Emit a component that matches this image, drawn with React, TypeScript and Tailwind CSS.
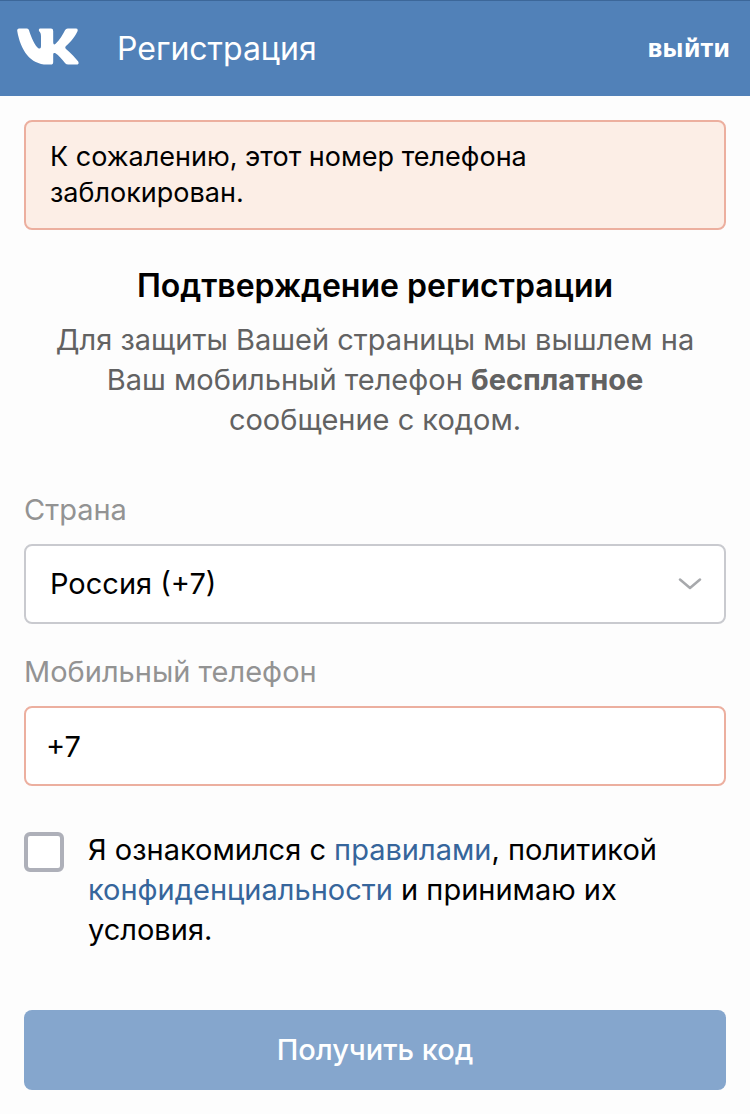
import React, { useState } from "react";

const countries = [
  { code: "ru", label: "Россия (+7)", prefix: "+7" },
  { code: "by", label: "Беларусь (+375)", prefix: "+375" },
  { code: "ua", label: "Украина (+380)", prefix: "+380" },
];

const Logo: React.FC = () => (
  <svg
    className="mb-1 h-[38px] w-[62px] shrink-0"
    viewBox="0 0 62 38"
    fill="#fff"
    aria-hidden="true"
  >
    <path d="M2 .6H10Q11.500 .6 12 2.200C14.500 10 18 17.500 21.300 20.200C23.600 21.500 24 19.500 24 17.500V8.500C24 5.800 23.400 4.500 22.200 3.200C21.400 2 21.900 .6 23.500 .6H34Q36.200 .6 36.200 3V14C36.200 16.500 37.200 17 38.600 15.700C42.500 12 46 6.300 48 2.200Q48.800 .6 50.800 .6H58.800Q61.400 .6 60.500 3.200C58.500 8 53.500 14 49 18.100C48 19.100 48 19.900 49 20.900C54 25 58.500 29.800 61.200 33.600C62.200 35.300 61.200 36.600 59.500 36.600H51.200Q49.400 36.600 48.200 35.200C45 31.200 41.500 27.400 38.500 25.300C37 24.400 36.200 25 36.200 26.500V34Q36.200 36.600 33.700 36.600H30C13.500 36.600 3.500 22.500 .2 2.800Q0 .6 2 .6Z" />
  </svg>
);

const Chevron: React.FC = () => (
  <svg
    className="pointer-events-none absolute right-6 top-1/2 h-3 w-6 -translate-y-1/2"
    viewBox="0 0 24 12"
    fill="none"
    stroke="#a7a9ac"
    strokeWidth={2.5}
    strokeLinecap="round"
    strokeLinejoin="round"
    aria-hidden="true"
  >
    <path d="M2 1.500L12 10L22 1.500" />
  </svg>
);

const App: React.FC = () => {
  const [country, setCountry] = useState("ru");
  const [phone, setPhone] = useState("+7");
  const [accepted, setAccepted] = useState(false);

  const changeCountry = (code: string) => {
    setCountry(code);
    setPhone(countries.find((c) => c.code === code)?.prefix ?? "");
  };

  return (
    <div className="min-h-screen bg-[#fdfdfd] font-['Inter','Liberation_Sans',sans-serif] text-[29px] leading-10 text-black">
      <header className="flex h-24 items-center border-t border-[#3c6799] bg-[#5181b8] pl-[17px] pr-5 text-white">
        <Logo />
        <h1 className="ml-[38px] grow text-[32px]">Регистрация</h1>
        <a
          href="#logout"
          className="mb-1 font-['Noto_Sans','Open_Sans',sans-serif] text-[25px] font-bold"
        >
          выйти
        </a>
      </header>

      <main className="p-6">
        <div
          role="alert"
          className="rounded-lg border-2 border-[#ecaf9f] bg-[#fceee6] px-6 py-[17px] text-[27px] leading-9"
        >
          К сожалению, этот номер телефона
          <br />
          заблокирован.
        </div>

        <section className="mt-9 text-center">
          <h2 className="text-[32px] font-semibold">
            Подтверждение регистрации
          </h2>
          <p className="mt-3.5 px-6 text-[#626262]">
            Для защиты Вашей страницы мы вышлем на Ваш мобильный телефон{" "}
            <b>бесплатное</b> сообщение с кодом.
          </p>
        </section>

        <form className="mt-[50px]" onSubmit={(e) => e.preventDefault()}>
          <label htmlFor="country" className="block text-[#939393]">
            Страна
          </label>
          <div className="relative mt-3.5">
            <select
              id="country"
              value={country}
              onChange={(e) => changeCountry(e.target.value)}
              className="h-20 w-full appearance-none rounded-lg border-2 border-[#c9cacf] bg-white px-6"
            >
              {countries.map((c) => (
                <option key={c.code} value={c.code}>
                  {c.label}
                </option>
              ))}
            </select>
            <Chevron />
          </div>

          <label htmlFor="phone" className="mt-7 block text-[#939393]">
            Мобильный телефон
          </label>
          <input
            id="phone"
            type="tel"
            value={phone}
            onChange={(e) => setPhone(e.target.value)}
            className="mt-3.5 block h-20 w-full rounded-lg border-2 border-[#ecaf9f] bg-white px-5"
          />

          <div className="mt-11 flex items-start gap-6">
            <input
              id="rules"
              type="checkbox"
              checked={accepted}
              onChange={(e) => setAccepted(e.target.checked)}
              className="mt-0.5 size-10 shrink-0 appearance-none rounded-md border-4 border-[#aeb0b9] bg-white checked:bg-[#5181b8]"
            />
            <label htmlFor="rules">
              Я ознакомился с{" "}
              <a href="#terms" className="text-[#36659b]">
                правилами
              </a>
              , политикой{" "}
              <a href="#privacy" className="text-[#36659b]">
                конфиденциальности
              </a>{" "}
              и принимаю их условия.
            </label>
          </div>

          <button
            type="submit"
            className="mt-15 h-20 w-full rounded-lg bg-[#85a6cd] font-medium text-white"
          >
            Получить код
          </button>
        </form>
      </main>
    </div>
  );
};

export default App;
